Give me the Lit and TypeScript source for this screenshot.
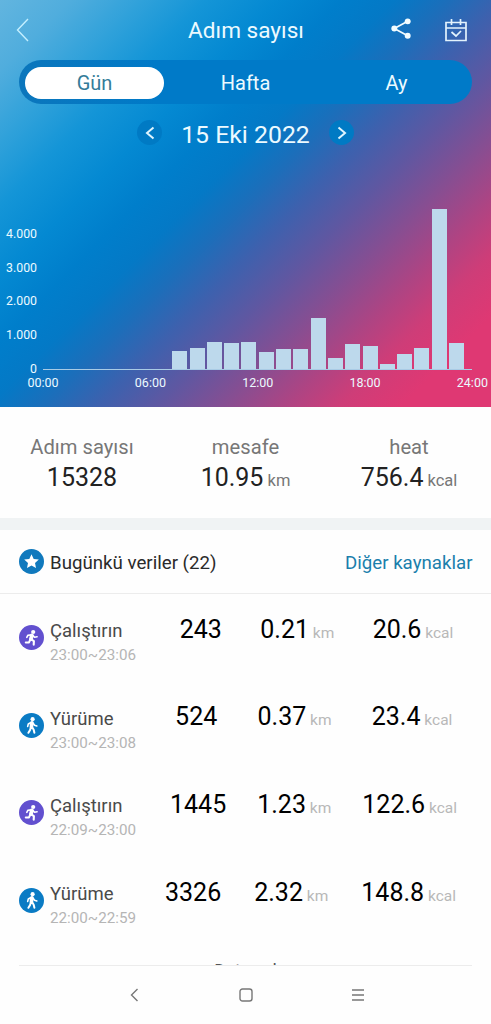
import { LitElement, html, css, svg } from "lit";
import { customElement } from "lit/decorators.js";

const HOURS = [0, 0, 0, 0, 0, 0, 0, 18, 21, 27, 26, 27, 17, 20, 20.5, 51, 11.5, 25, 23.5, 5, 15, 21, 160.5, 26];
const ROWS = [
  { run: true, name: "Çalıştırın", time: "23:00~23:06", steps: "243", km: "0.21", kcal: "20.6", span: 312 },
  { run: false, name: "Yürüme", time: "23:00~23:08", steps: "524", km: "0.37", kcal: "23.4", span: 317.5 },
  { run: true, name: "Çalıştırın", time: "22:09~23:00", steps: "1445", km: "1.23", kcal: "122.6", span: 318 },
  { run: false, name: "Yürüme", time: "22:00~22:59", steps: "3326", km: "2.32", kcal: "148.8", span: 324 },
];

const runner = svg`<circle cx="12.5" cy="12.5" r="12.5" fill="#6250cf"/>
  <circle cx="14.2" cy="7" r="2.1" fill="#fff"/>
  <g fill="none" stroke="#fff" stroke-linecap="round" stroke-linejoin="round">
  <path d="M12.9 10.5 11.9 14" stroke-width="3.8"/>
  <path d="M12.4 9.8 8.8 10.4 7.8 12.4M14 10.6l1.6 1.6 2.5-.4" stroke-width="1.6"/>
  <path d="m11.3 14.6-1.3 2.8-3.2.1M12.3 14.4l2.6 1.8-.2 3.4" stroke-width="2.1"/></g>`;
const walker = svg`<circle cx="12.5" cy="12.5" r="12.5" fill="#0a7bc4"/>
  <circle cx="13.6" cy="6.2" r="2.1" fill="#fff"/>
  <g fill="none" stroke="#fff" stroke-linecap="round" stroke-linejoin="round">
  <path d="M12.9 9.9 12.4 13.8" stroke-width="3.6"/>
  <path d="M12 9.5 9.3 11 8.7 13.4M14 10l1.5 2.2 2.3.7" stroke-width="1.6"/>
  <path d="m11.9 14.2-.8 2.8-1.7 2.8M13.2 14.2l1.5 2.6.7 3" stroke-width="2"/></g>`;

@customElement("app-root")
export class AppRoot extends LitElement {
  static styles = css`
    :host { display: flex; flex-direction: column; height: 1024px; background: #fefefe; overflow: hidden;
      font-family: Roboto, "Noto Sans", sans-serif; color: #222; }
    svg { display: block; flex: none; }
    .hero { height: 407px; flex: none; color: #ecfaff; box-sizing: border-box;
      background: linear-gradient(135deg, #62b5df 0%, #50addd 8%, #2fa1da 16%, #1495d7 23%, #0489d2 31%, #007ecb 38%, #0479c6 44%, #1c6eba 50%, #3d61ae 56%, #6057a1 63%, #864e92 70%, #ae4483 77%, #ce3d78 83%, #df3873 90%, #df3873 100%); }
    .bar { display: grid; grid-template-columns: 188px 1fr 187px; height: 60px; align-items: center; }
    .back { padding-left: 16px; }
    .title { font-size: 22.6px; text-align: center; white-space: nowrap; }
    .tools { display: flex; justify-content: flex-end; gap: 32px; padding: 0 23px 0 0; }
    .tabs { margin: 0 19px; height: 44px; border-radius: 22px; display: grid;
      grid-template-columns: 151px 151px 1fr; align-items: center; text-align: center; font-size: 20px;
      box-sizing: border-box; background: linear-gradient(90deg, #0b76bc, #007ac8 30%); }
    .active { margin: 0 6px; height: 32px; line-height: 33px; border-radius: 16px; background: #fff; color: #347c99; }
    .tab { line-height: 46px; }
    .date { display: flex; justify-content: center; align-items: center; height: 60px; gap: 17px; }
    .date-text { font-size: 24.8px; line-height: 30px; padding-top: 1px; width: 133px; text-align: center; white-space: nowrap; }
    .round { width: 25px; height: 25px; margin-bottom: 3px; border-radius: 50%; background: #007ac4; display: flex; align-items: center; justify-content: center; }
    .plot { display: grid; grid-template-columns: 43px 429px; height: 206px; }
    .ylabels { display: flex; flex-direction: column; justify-content: flex-end; gap: 19.8px; font-size: 12.3px; line-height: 14px; text-align: right; padding-right: 6px; margin-bottom: -6px; }
    .bars { display: flex; align-items: flex-end; border-bottom: 1px solid #a9cbe5; gap: 2.3px; padding: 0 7.9px 0 8.2px; box-sizing: border-box; }
    .col { flex: 1; background: #bdd9ec; }
    .xlabels { display: flex; justify-content: space-between; padding: 7px 3px 0 27.5px; font-size: 12.5px; line-height: 12px; }
    .summary { display: grid; grid-template-columns: 164px 163px 164px; height: 111px; flex: none; text-align: center; box-sizing: border-box; padding-top: 27px; }
    .label { font-size: 20.2px; line-height: 26px; color: #777; }
    .value { font-size: 25px; line-height: 36px; color: #222; white-space: nowrap; }
    .value small { font-size: 16.5px; color: #777; }
    .band { height: 12px; flex: none; background: #f0f3f4; }
    .head { display: flex; align-items: center; height: 64px; flex: none; padding: 0 18.5px; border-bottom: 1px solid #ececec; box-sizing: border-box; }
    .head-text { font-size: 18.7px; line-height: 22px; padding-top: 2px; margin-left: 6.5px; flex: 1; color: #2b2b2b; }
    .link { font-size: 18.7px; line-height: 22px; padding-top: 2px; color: #1b7fac; }
    .list { height: 371px; flex: none; overflow: hidden; }
    .row { display: flex; height: 87.7px; padding: 0 18.5px; }
    .icon { padding-top: 31px; width: 31.5px; }
    .who { flex: 1; }
    .name { padding-top: 25px; font-size: 18.5px; line-height: 24px; color: #4a4a4a; }
    .time { padding-top: 1px; font-size: 15.2px; line-height: 23px; color: #b5b5b5; }
    .nums { display: flex; justify-content: space-around; flex: none; }
    .num { padding-top: 20.6px; font-size: 25px; line-height: 30px; color: #000; white-space: nowrap; }
    .num small { font-size: 15.5px; color: #b8b8b8; }
    .more { text-align: center; font-size: 17.6px; line-height: 22px; padding-top: 15px; color: #555; }
    .foot { border-top: 1px solid #ececec; margin: 0 19px; padding-left: 1px; height: 58px; display: flex; align-items: center; justify-content: center; gap: 98px; }
  `;

  render() {
    return html`
      <section class="hero">
        <div class="bar">
          <div class="back"><svg width="13" height="24" viewBox="0 0 13 24"><path d="M12 1 1.5 12 12 23" fill="none" stroke="#c4efff" stroke-width="1.4"/></svg></div>
          <div class="title">Adım sayısı</div>
          <div class="tools">
            <svg width="22" height="22" viewBox="0 0 22 23"><path d="M18 3.5 4 11l14 7.500" fill="none" stroke="#f2fcff" stroke-width="1.8"/><g fill="#f2fcff"><circle cx="18" cy="3.5" r="3.1"/><circle cx="4" cy="11" r="3.1"/><circle cx="18" cy="18.5" r="3.1"/></g></svg>
            <svg width="24" height="25" viewBox="0 0 24 25" fill="none" stroke="#e3f3fd" stroke-width="1.7"><path d="M2 4.500h20v18H2zM2 10h20M7.500 1v6M16.500 1v6"/><path d="m7.500 14 4.500 4 5-5"/></svg>
          </div>
        </div>
        <div class="tabs"><div class="active">Gün</div><div class="tab">Hafta</div><div class="tab">Ay</div></div>
        <div class="date">
          <div class="round"><svg width="10" height="14" viewBox="0 0 10 14"><path d="M8.500 1.500 2 7l6.500 5.500" fill="none" stroke="#dff5ff" stroke-width="2"/></svg></div>
          <div class="date-text">15 Eki 2022</div>
          <div class="round"><svg width="10" height="14" viewBox="0 0 10 14"><path d="M1.500 1.500 8 7l-6.500 5.500" fill="none" stroke="#dff5ff" stroke-width="2"/></svg></div>
        </div>
        <div class="plot">
          <div class="ylabels"><span>4.000</span><span>3.000</span><span>2.000</span><span>1.000</span><span>0</span></div>
          <div class="bars">${HOURS.map((h) => html`<div class="col" style="height:${h}px"></div>`)}</div>
        </div>
        <div class="xlabels"><span>00:00</span><span>06:00</span><span>12:00</span><span>18:00</span><span>24:00</span></div>
      </section>
      <section class="summary">
        <div><div class="label">Adım sayısı</div><div class="value">15328</div></div>
        <div><div class="label">mesafe</div><div class="value">10.95<small> km</small></div></div>
        <div><div class="label">heat</div><div class="value">756.4<small> kcal</small></div></div>
      </section>
      <div class="band"></div>
      <div class="head">
        <svg width="25" height="25" viewBox="0 0 25 25"><circle cx="12.5" cy="12.5" r="12.5" fill="#1079bd"/><path d="m12.5 5.200 2.200 4.700 5.100.6-3.800 3.500 1 5.100-4.500-2.500L8 19.100 9 14l-3.800-3.500 5.100-.6z" fill="#fff"/></svg>
        <div class="head-text">Bugünkü veriler (22)</div>
        <div class="link">Diğer kaynaklar</div>
      </div>
      <div class="list">
        ${ROWS.map((r) => html`<div class="row">
          <div class="icon"><svg width="25" height="25" viewBox="0 0 25 25">${r.run ? runner : walker}</svg></div>
          <div class="who"><div class="name">${r.name}</div><div class="time">${r.time}</div></div>
          <div class="nums" style="width:${r.span}px">
            <div class="num">${r.steps}</div>
            <div class="num">${r.km}<small> km</small></div>
            <div class="num">${r.kcal}<small> kcal</small></div>
          </div>
        </div>`)}
        <div class="more">Detay al</div>
      </div>
      <div class="foot">
        <svg width="14" height="14" viewBox="0 0 14 14"><path d="M10.500 1l-6 6 6 6" fill="none" stroke="#777" stroke-width="1.4"/></svg>
        <svg width="14" height="14" viewBox="0 0 14 14"><rect x="1" y="1" width="12" height="12" rx="2.5" fill="none" stroke="#777" stroke-width="1.4"/></svg>
        <svg width="14" height="12" viewBox="0 0 14 12"><path d="M1 1h12M1 6h12M1 11h12" stroke="#777" stroke-width="1.3"/></svg>
      </div>`;
  }
}
